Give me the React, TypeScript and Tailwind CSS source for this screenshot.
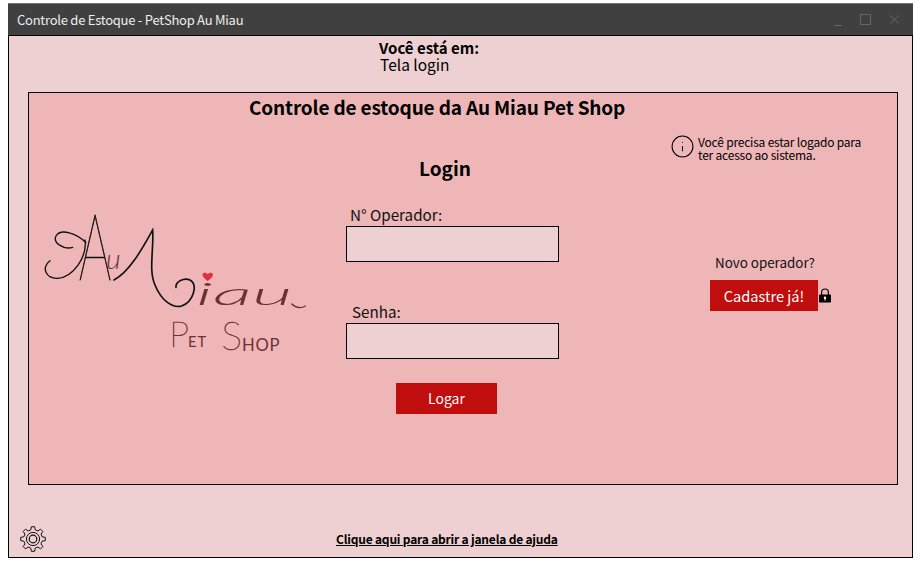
import React from "react";
import { Info } from "lucide-react";

// builds the outline of the cog in the footer
const gearPath = (() => {
  const teeth = 8;
  const pts: string[] = [];
  for (let i = 0; i < teeth; i++) {
    const a = (i / teeth) * Math.PI * 2 - Math.PI / 2;
    const step = (Math.PI * 2) / teeth;
    const add = (r: number, off: number) => {
      const x = 13 + r * Math.cos(a + off * step);
      const y = 13 + r * Math.sin(a + off * step);
      pts.push(`${x.toFixed(2)} ${y.toFixed(2)}`);
    };
    add(9.4, -0.3);
    add(12.4, -0.17);
    add(12.4, 0.17);
    add(9.4, 0.3);
  }
  return "M" + pts.join("L") + "Z";
})();

const Logo = () => (
  <svg viewBox="0 0 870 510" className="w-[290px] h-[170px] block overflow-visible">
    {/* swash on the A */}
    <path
      d="M168 128C140 100 92 84 78 108C68 128 100 150 128 142M165 120C172 170 130 232 82 235C50 236 32 205 60 182"
      fill="none"
      stroke="#111"
      strokeWidth="4"
      strokeLinecap="round"
    />
    <text x="146" y="241" textLength="98" lengthAdjust="spacingAndGlyphs" fontFamily="Lato" fontWeight="100" fontSize="275" fill="#111" stroke="#111" strokeWidth="2.5">A</text>
    <text x="228" y="208" textLength="44" lengthAdjust="spacingAndGlyphs" fontFamily="Lato" fontStyle="italic" fontWeight="300" fontSize="84" fill="#6d3035">u</text>
    {/* tail of the M */}
    <path
      d="M252 240C300 215 340 140 368 90C372 150 355 210 375 255C395 305 430 325 455 318C490 305 505 255 480 240C462 232 436 245 438 262"
      fill="none"
      stroke="#111"
      strokeWidth="5"
      strokeLinecap="round"
    />
    <text x="498" y="314" textLength="290" lengthAdjust="spacingAndGlyphs" fontFamily="Lato" fontStyle="italic" fontWeight="300" fontSize="92" fill="#6d3035">iau</text>
    <path d="M785 312C800 325 815 325 826 318" fill="none" stroke="#6d3035" strokeWidth="4" strokeLinecap="round" />
    <path
      d="M533 243C522 234 516 228 518 222C521 216 530 217 533 223C537 217 547 216 549 223C550 229 543 236 533 243Z"
      fill="#e0323c"
    />
    <text x="418" y="442" fontFamily="Lato" fontWeight="100" fontSize="106" fill="#6d3035" stroke="#6d3035" strokeWidth="1.5">P</text>
    <text x="474" y="442" fontFamily="Lato" fontWeight="400" fontSize="44" letterSpacing="3" fill="#6d3035">ET</text>
    <text x="574" y="450" fontFamily="Lato" fontWeight="100" fontSize="118" fill="#6d3035" stroke="#6d3035" strokeWidth="1.5">S</text>
    <text x="636" y="452" fontFamily="Lato" fontWeight="400" fontSize="50" letterSpacing="2" fill="#6d3035">HOP</text>
  </svg>
);

const Lock = () => (
  <svg viewBox="0 0 14 15" className="w-[14px] h-[15px] shrink-0 -mt-[1px]">
    <path d="M3.6 7V4.2C3.6 2.2 5 1 7 1s3.4 1.2 3.4 3.2V7" fill="none" stroke="#000" strokeWidth="1.2" />
    <rect x="1" y="6.4" width="12" height="8.2" rx="1" fill="#000" />
    <circle cx="7" cy="9.7" r="1.2" fill="#fff" />
    <rect x="6.5" y="10" width="1" height="2.6" fill="#fff" />
  </svg>
);

const Field = ({ label, labelClass }: { label: string; labelClass: string }) => (
  <div className="flex flex-col">
    <label className={`text-[15.2px] leading-[24px] text-[#111] ${labelClass}`}>{label}</label>
    <input className="h-[36px] w-[213px] bg-[#eed0d2] border border-black outline-none" />
  </div>
);

export default function App() {
  return (
    <div
      className="h-[562px] w-[921px] bg-white pt-[3px] pl-[8px] overflow-hidden"
      style={{ fontFamily: '"Noto Sans CJK SC", sans-serif' }}
    >
      <div className="w-[905px] h-[555px] flex flex-col">
        <div className="h-[33px] shrink-0 bg-[#404040] border-t border-[#777] border-b border-b-black flex items-center pl-[9px] text-[13px] tracking-[-0.25px] text-[#eeeeee]">
          <span className="flex-1">Controle de Estoque - PetShop Au Miau</span>
          <div className="flex items-center pr-[13px]">
            <span className="w-[8px] h-px bg-[#666666] mt-[11px] mr-[18px]" />
            <span className="w-[11px] h-[11px] border border-[#666666] mr-[18px]" />
            <svg viewBox="0 0 11 11" className="w-[11px] h-[11px]">
              <path d="M1 1.5L10 9.5M10 1.5L1 9.5" stroke="#666666" strokeWidth="1" />
            </svg>
          </div>
        </div>

        <div className="flex-1 flex flex-col bg-[#eed0d2] border-x border-b border-black">
          <div className="pl-[370px] h-[56px] pt-[3px] text-black">
            <p className="font-bold text-[15px] leading-[17px]">Você está em:</p>
            <p className="pl-px text-[15.5px] leading-[17px]">Tela login</p>
          </div>

          <div className="ml-[19px] w-[870px] h-[393px] bg-[#efb6b8] border border-black flex flex-col">
            <h1 className="h-[30px] pl-[220px] text-[19px] leading-[28px] tracking-[-0.15px] font-bold text-black">
              Controle de estoque da Au Miau Pet Shop
            </h1>
            <div className="flex flex-1">
              <div className="w-[317px] pt-[77px] pl-px">
                <Logo />
              </div>

              <div className="w-[213px] flex flex-col">
                <h2 className="mt-[32px] pl-[73px] text-[19px] leading-[26px] font-bold text-black">Login</h2>
                <div className="mt-[21px]">
                  <Field label="N° Operador:" labelClass="pl-[4px]" />
                </div>
                <div className="mt-[37px]">
                  <Field label="Senha:" labelClass="pl-[6px]" />
                </div>
                <button className="mt-[24px] ml-[50px] w-[101px] h-[31px] bg-[#c00d0d] text-white text-[14px]">Logar</button>
              </div>

              <div className="ml-[113px] flex flex-col">
                <div className="mt-[12px] flex items-start">
                  <Info size={25} strokeWidth={1} className="text-black -mt-[1px] -ml-[2px] shrink-0" />
                  <p className="ml-[3px] text-[12px] leading-[13px] tracking-[-0.2px] text-black">
                    Você precisa estar logado para
                    <br />
                    ter acesso ao sistema.
                  </p>
                </div>
                <p className="mt-[91px] pl-[43px] text-[13.4px] leading-[20px] text-[#111]">Novo operador?</p>
                <div className="mt-[8px] ml-[38px] flex items-center">
                  <button className="w-[108px] h-[31px] bg-[#c00d0d] text-white text-[14.6px]">Cadastre já!</button>
                  <Lock />
                </div>
              </div>
            </div>
          </div>

          <div className="flex-1 flex items-end pb-[5px] pl-[11px]">
            <svg viewBox="0 0 26 26" className="w-[26px] h-[26px] shrink-0">
              <path d={gearPath} fill="none" stroke="#111" strokeWidth="1" strokeLinejoin="round" />
              <circle cx="13" cy="13" r="6.6" fill="none" stroke="#111" strokeWidth="1" />
              <circle cx="13" cy="13" r="3.8" fill="none" stroke="#111" strokeWidth="1.2" />
            </svg>
            <a className="ml-[290px] mb-[4px] text-[12px] leading-[18px] tracking-[-0.2px] font-bold underline text-black">
              Clique aqui para abrir a janela de ajuda
            </a>
          </div>
        </div>
      </div>
    </div>
  );
}
